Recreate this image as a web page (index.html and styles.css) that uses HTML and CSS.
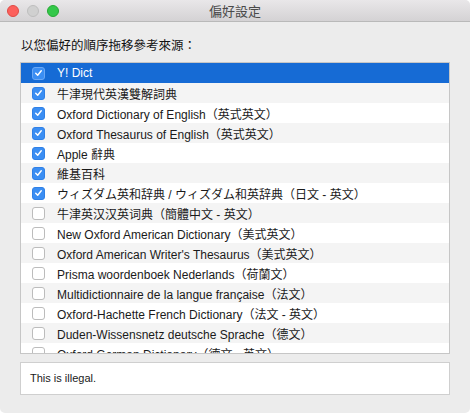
FILE: index.html
```html
<!DOCTYPE html>
<html lang="zh-Hant">
<head>
<meta charset="utf-8">
<title>偏好設定</title>
<link rel="stylesheet" href="styles.css">
</head>
<body>
<div class="window">
  <div class="titlebar">
    <div class="lights">
      <span class="light red"></span>
      <span class="light gray"></span>
      <span class="light green"></span>
    </div>
    <div class="title">偏好設定</div>
  </div>
  <div class="content">
    <div class="heading">以您偏好的順序拖移參考來源：</div>
    <div class="list">
      <div class="row selected"><span class="cb on"><svg viewBox="0 0 12 12"><polyline points="3,6.3 5.1,8.4 9,3.6"/></svg></span><span class="label">Y! Dict</span></div>
      <div class="row"><span class="cb on"><svg viewBox="0 0 12 12"><polyline points="3,6.3 5.1,8.4 9,3.6"/></svg></span><span class="label">牛津現代英漢雙解詞典</span></div>
      <div class="row"><span class="cb on"><svg viewBox="0 0 12 12"><polyline points="3,6.3 5.1,8.4 9,3.6"/></svg></span><span class="label">Oxford Dictionary of English（英式英文）</span></div>
      <div class="row"><span class="cb on"><svg viewBox="0 0 12 12"><polyline points="3,6.3 5.1,8.4 9,3.6"/></svg></span><span class="label">Oxford Thesaurus of English（英式英文）</span></div>
      <div class="row"><span class="cb on"><svg viewBox="0 0 12 12"><polyline points="3,6.3 5.1,8.4 9,3.6"/></svg></span><span class="label">Apple 辭典</span></div>
      <div class="row"><span class="cb on"><svg viewBox="0 0 12 12"><polyline points="3,6.3 5.1,8.4 9,3.6"/></svg></span><span class="label">維基百科</span></div>
      <div class="row"><span class="cb on"><svg viewBox="0 0 12 12"><polyline points="3,6.3 5.1,8.4 9,3.6"/></svg></span><span class="label">ウィズダム英和辞典 / ウィズダム和英辞典（日文 - 英文）</span></div>
      <div class="row"><span class="cb"></span><span class="label">牛津英汉汉英词典（簡體中文 - 英文）</span></div>
      <div class="row"><span class="cb"></span><span class="label">New Oxford American Dictionary（美式英文）</span></div>
      <div class="row"><span class="cb"></span><span class="label">Oxford American Writer's Thesaurus（美式英文）</span></div>
      <div class="row"><span class="cb"></span><span class="label">Prisma woordenboek Nederlands（荷蘭文）</span></div>
      <div class="row"><span class="cb"></span><span class="label">Multidictionnaire de la langue française（法文）</span></div>
      <div class="row"><span class="cb"></span><span class="label">Oxford-Hachette French Dictionary（法文 - 英文）</span></div>
      <div class="row"><span class="cb"></span><span class="label">Duden-Wissensnetz deutsche Sprache（德文）</span></div>
      <div class="row"><span class="cb"></span><span class="label">Oxford German Dictionary（德文 - 英文）</span></div>
    </div>
    <div class="message">This is illegal.</div>
  </div>
</div>
</body>
</html>
```
FILE: styles.css
```css
html, body {
  margin: 0;
  padding: 0;
  background: #ffffff;
}
body {
  width: 470px;
  height: 415px;
  overflow: hidden;
  font-family: "Liberation Sans", "Noto Sans CJK TC", sans-serif;
  color: #1a1a1a;
}
.window {
  width: 470px;
  height: 413px;
  background: #ececec;
  border-radius: 5px;
  overflow: hidden;
  display: flex;
  flex-direction: column;
}
.titlebar {
  height: 21px;
  background: linear-gradient(#e9e7e9, #d4d2d4);
  border-bottom: 1px solid #b9b9b9;
  display: flex;
  align-items: center;
  position: relative;
}
.lights {
  display: flex;
  gap: 8px;
  padding-left: 7px;
}
.light {
  width: 12px;
  height: 12px;
  border-radius: 50%;
  box-sizing: border-box;
}
.red { background: #fc605c; border: 1px solid #de4a45; }
.gray { background: #d0d0d0; border: 1px solid #bdbdbd; }
.green { background: #34c84a; border: 1px solid #26a934; }
.title {
  position: absolute;
  left: 0;
  right: 0;
  top: 0;
  bottom: 0;
  display: flex;
  align-items: center;
  justify-content: center;
  font-size: 13px;
  color: #4a4a4a;
}
.content {
  padding: 0 20px 0 20px;
  display: flex;
  flex-direction: column;
}
.heading {
  font-size: 12.5px;
  line-height: 16px;
  margin-top: 16px;
  margin-left: 1px;
  color: #111;
}
.list {
  margin-top: 8px;
  width: 428px;
  height: 290px;
  border: 1px solid #c6c6c6;
  background: #ffffff;
  overflow: hidden;
}
.row {
  height: 20px;
  display: flex;
  align-items: center;
  font-size: 12px;
  white-space: nowrap;
}
.row:nth-child(even) {
  background: #f4f4f4;
}
.row.selected {
  background: #166bd5;
  color: #ffffff;
}
.cb {
  width: 13px;
  height: 13px;
  box-sizing: border-box;
  border-radius: 3px;
  border: 1px solid #bcbcbc;
  background: #ffffff;
  margin-left: 11px;
  margin-right: 12px;
  flex: none;
  display: flex;
  align-items: center;
  justify-content: center;
}
.cb.on {
  background: #3b8ef3;
  border-color: #2f80e6;
}
.cb svg {
  width: 12px;
  height: 12px;
  fill: none;
  stroke: #ffffff;
  stroke-width: 1.6;
  stroke-linecap: round;
  stroke-linejoin: round;
}
.row.selected .cb.on {
  border-color: #6aa8f5;
}
.message {
  margin-top: 8px;
  height: 31px;
  border: 1px solid #cfcfcf;
  background: #ffffff;
  font-size: 11px;
  line-height: 31px;
  padding-left: 9px;
  width: 419px;
}
```
